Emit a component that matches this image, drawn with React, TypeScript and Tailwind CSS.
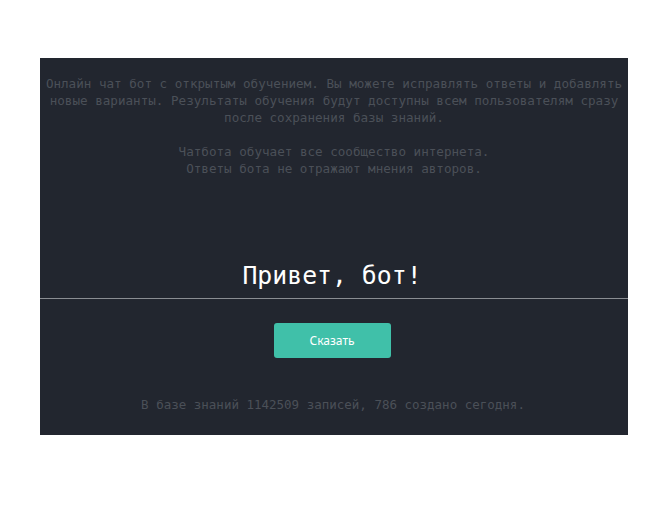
import React from "react";

export default function App() {
  const mono = { fontFamily: '"DejaVu Sans Mono", "Liberation Mono", monospace' };
  return (
    <div className="w-[671px] h-[512px] bg-white overflow-hidden">
      <div className="ml-[40px] mt-[58px] w-[588px] h-[377px] bg-[#22262f] flex flex-col" style={mono}>
        <div className="pt-[17px] px-[4px] text-center text-[12.6px] leading-[17px] text-[#4b5058]">
          <p>Онлайн чат бот с открытым обучением. Вы можете исправлять ответы и добавлять новые варианты. Результаты обучения будут доступны всем пользователям сразу после сохранения базы знаний.</p>
          <p className="mt-[17px]">Чатбота обучает все сообщество интернета.</p>
          <p>Ответы бота не отражают мнения авторов.</p>
        </div>
        <div className="mt-[81px] h-[41px] border-b border-[#8a8d92] pr-[4px] text-center text-[24.8px] leading-[36px] text-white">
          Привет, бот!
        </div>
        <div className="mt-[24px] flex justify-center pr-[4px]">
          <button
            className="w-[117px] h-[35px] rounded-[3px] bg-[#40c0a9] text-white text-[12px]"
            style={{ fontFamily: '"Noto Sans", "Open Sans", sans-serif' }}
          >
            Сказать
          </button>
        </div>
        <div className="mt-[38px] pr-[2px] text-center text-[12.5px] leading-[17px] text-[#4b5058]">
          В базе знаний 1142509 записей, 786 создано сегодня.
        </div>
      </div>
    </div>
  );
}
